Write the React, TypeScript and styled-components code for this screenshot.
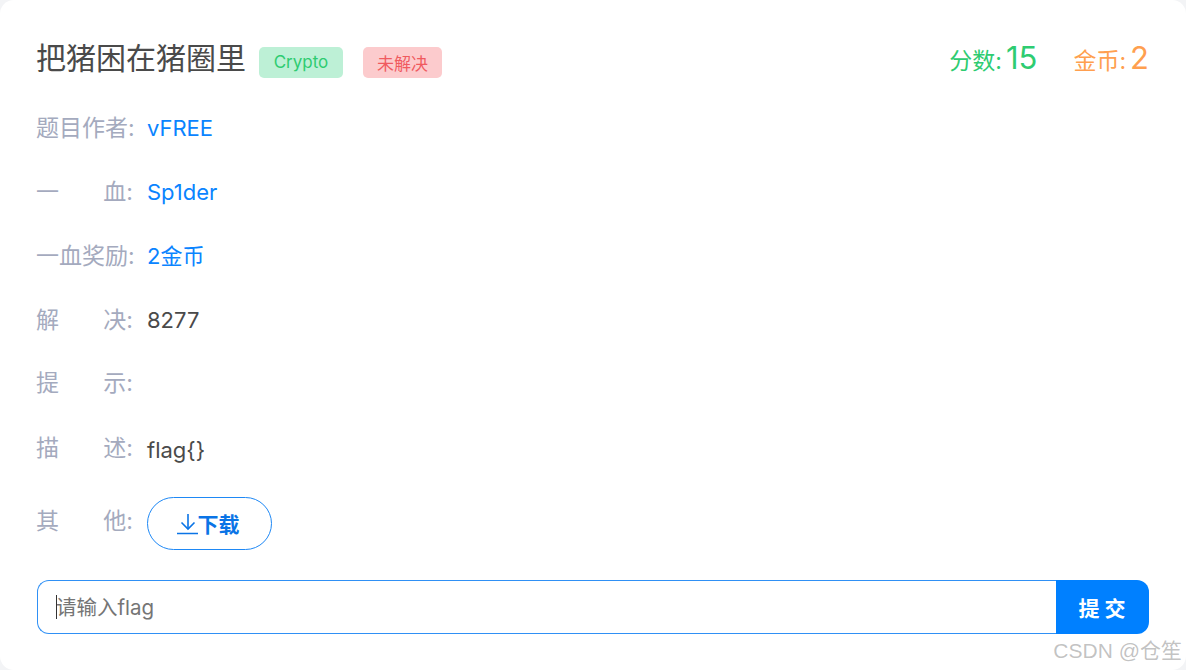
import React from 'react'
import styled, { createGlobalStyle } from 'styled-components'

const GlobalStyle = createGlobalStyle`
  html, body {
    margin: 0;
    padding: 0;
    background: #f3f4f6;
  }
  body {
    font-family: 'Inter', 'Noto Sans CJK SC', sans-serif;
  }
`

const Card = styled.div`
  position: relative;
  box-sizing: border-box;
  width: 1186px;
  height: 670px;
  padding: 38px 37px 0 36px;
  background: #fff;
  border-radius: 14px;
  overflow: hidden;
`

const Header = styled.div`
  display: flex;
  align-items: center;
  justify-content: space-between;
  height: 40px;
`

const TitleGroup = styled.div`
  display: flex;
  align-items: center;
`

const Title = styled.h1`
  margin: 0 13px 0 0;
  font-size: 30px;
  font-weight: 400;
  line-height: 40px;
  color: #4a4a4a;
`

const Tag = styled.span<{ $bg: string; $fg: string; $width: number }>`
  display: flex;
  align-items: center;
  justify-content: center;
  box-sizing: border-box;
  width: ${(p) => p.$width}px;
  height: 31px;
  margin: 8px 20px 0 0;
  border-radius: 5px;
  background: ${(p) => p.$bg};
  color: ${(p) => p.$fg};
  font-size: 17px;
`

const Scores = styled.div`
  display: flex;
  gap: 36px;
  padding-top: 3px;
`

const Score = styled.span<{ $color: string }>`
  display: flex;
  align-items: baseline;
  gap: 4px;
  color: ${(p) => p.$color};
  font-size: 23px;
  line-height: 40px;

  b {
    font-weight: 400;
    font-size: 31px;
  }
`

const Rows = styled.div`
  display: flex;
  flex-direction: column;
  margin-top: 18px;
`

const Row = styled.div<{ $height: number }>`
  display: flex;
  align-items: center;
  height: ${(p) => p.$height}px;
`

const Label = styled.span`
  display: flex;
  justify-content: space-between;
  width: 97px;
  margin-right: 14px;
  color: #a4aabe;
  font-size: 23px;
  line-height: 30px;
  white-space: nowrap;
`

const Value = styled.span<{ $link?: boolean }>`
  color: ${(p) => (p.$link ? '#0a84ff' : '#4a4a4a')};
  font-size: 22px;
  line-height: 30px;
`

const Description = styled(Value)`
  margin-top: 4px;
`

const DownloadButton = styled.button`
  display: flex;
  align-items: center;
  justify-content: center;
  box-sizing: border-box;
  width: 125px;
  height: 53px;
  margin-top: 6px;
  padding: 0 3px 2px 0;
  border: 1px solid #1e88f5;
  border-radius: 27px;
  background: #fff;
  color: #0a74e6;
  font-family: inherit;
  font-size: 21px;
  font-weight: 700;
`

const FlagForm = styled.div`
  position: relative;
  display: flex;
  height: 54px;
  margin: 19px 0 0 1px;
`

const FlagInput = styled.input`
  flex: 1;
  min-width: 0;
  box-sizing: border-box;
  padding: 0 18px;
  border: 1px solid #2f90f5;
  border-right: none;
  border-radius: 12px 0 0 12px;
  outline: none;
  background: #fff;
  font-family: inherit;
  font-size: 20.5px;

  &::placeholder {
    color: #757575;
    opacity: 1;
  }
`

const Caret = styled.span`
  position: absolute;
  left: 19px;
  top: 15px;
  width: 1px;
  height: 24px;
  background: #333;
`

const SubmitButton = styled.button`
  width: 93px;
  padding: 0 0 0 4px;
  border: none;
  border-radius: 0 12px 12px 0;
  background: #0080ff;
  color: #fff;
  font-family: inherit;
  font-size: 21px;
  font-weight: 700;
  letter-spacing: 5px;
`

const Watermark = styled.span`
  position: absolute;
  right: 4px;
  bottom: 5px;
  color: rgba(120, 120, 120, 0.45);
  font-family: 'Liberation Sans', 'Noto Sans CJK SC', sans-serif;
  font-size: 21px;
  line-height: 28px;
`

const DownloadIcon = () => (
  <svg width="21" height="24" viewBox="0 0 21 24" fill="none" stroke="currentColor" strokeWidth="1.6">
    <path d="M11 3v15" />
    <path d="M4.5 11.5 11 18l6.5-6.5" />
    <path d="M0 22.5h21" strokeWidth="1.4" />
  </svg>
)

const App = () => {
  return (
    <Card>
      <GlobalStyle />
      <Header>
        <TitleGroup>
          <Title>把猪困在猪圈里</Title>
          <Tag $bg="#bdf0d6" $fg="#2ecc71" $width={84}>Crypto</Tag>
          <Tag $bg="#fccbcd" $fg="#f05a5f" $width={79}>未解决</Tag>
        </TitleGroup>
        <Scores>
          <Score $color="#2ecc71">分数: <b>15</b></Score>
          <Score $color="#ff9f4f">金币: <b>2</b></Score>
        </Scores>
      </Header>
      <Rows>
        <Row $height={64}>
          <Label>题目作者:</Label>
          <Value $link>vFREE</Value>
        </Row>
        <Row $height={64}>
          <Label><span>一</span><span>血:</span></Label>
          <Value $link>Sp1der</Value>
        </Row>
        <Row $height={64}>
          <Label>一血奖励:</Label>
          <Value $link>2金币</Value>
        </Row>
        <Row $height={63}>
          <Label><span>解</span><span>决:</span></Label>
          <Value>8277</Value>
        </Row>
        <Row $height={64}>
          <Label><span>提</span><span>示:</span></Label>
        </Row>
        <Row $height={65}>
          <Label><span>描</span><span>述:</span></Label>
          <Description>flag{'{}'}</Description>
        </Row>
        <Row $height={81}>
          <Label><span>其</span><span>他:</span></Label>
          <DownloadButton>
            <DownloadIcon />
            下载
          </DownloadButton>
        </Row>
      </Rows>
      <FlagForm>
        <FlagInput placeholder="请输入flag" />
        <Caret />
        <SubmitButton>提交</SubmitButton>
      </FlagForm>
      <Watermark>CSDN @仓笙</Watermark>
    </Card>
  )
}

export default App
